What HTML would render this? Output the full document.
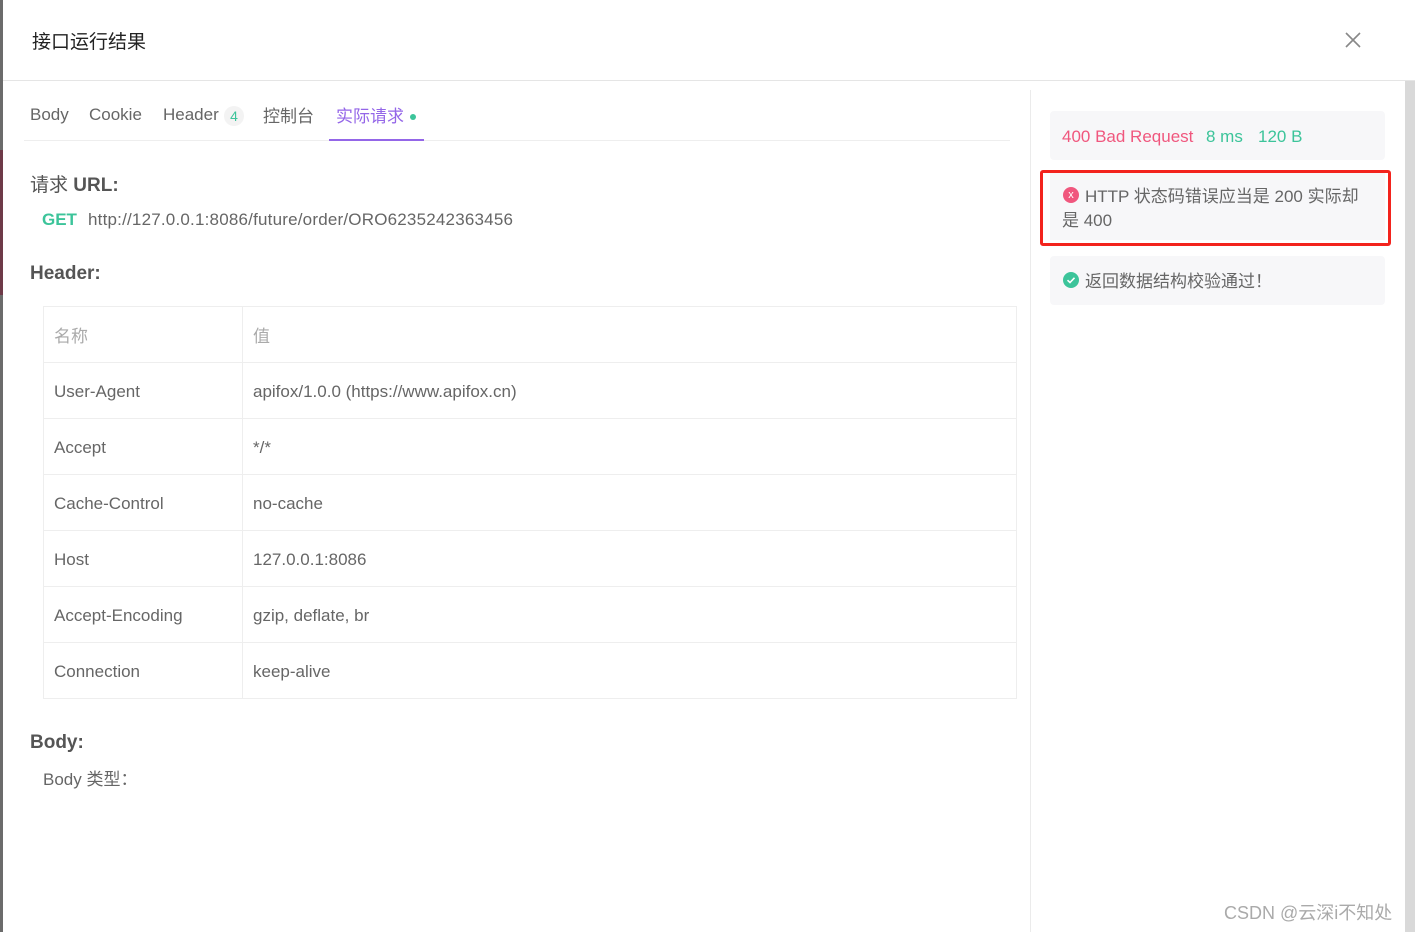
<!DOCTYPE html><html><head><meta charset="utf-8"><style>
*{margin:0;padding:0;box-sizing:border-box}
body{width:1415px;height:932px;background:#fff;font-family:"Liberation Sans","Noto Sans CJK SC",sans-serif;position:relative;overflow:hidden;color:#555}
.a{position:absolute;white-space:nowrap}
</style></head><body>
<div class="a" style="left:0;top:0;width:3px;height:932px;background:#6b6b6b"></div>
<div class="a" style="left:0;top:150px;width:3px;height:145px;background:#6e3a48"></div>
<div class="a" style="left:1405px;top:80px;width:10px;height:852px;background:#d9d9d9"></div>
<div class="a" style="left:32px;top:27px;font-size:19px;color:#222">接口运行结果</div>
<svg class="a" style="left:1345px;top:32px" width="16" height="16"><path d="M1 1L15 15M15 1L1 15" stroke="#888" stroke-width="1.6"/></svg>
<div class="a" style="left:3px;top:80px;width:1412px;height:1px;background:#e5e5e5"></div>
<div class="a" style="left:1030px;top:90px;width:1px;height:842px;background:#ebebeb"></div>
<div class="a" style="left:30px;top:105px;font-size:17px;color:#666">Body</div>
<div class="a" style="left:89px;top:105px;font-size:17px;color:#666">Cookie</div>
<div class="a" style="left:163px;top:105px;font-size:17px;color:#666">Header</div>
<div class="a" style="left:224px;top:106px;width:20px;height:20px;border-radius:10px;background:#f3f3f3;color:#3cc49a;font-size:14px;text-align:center;line-height:20px">4</div>
<div class="a" style="left:263px;top:102px;font-size:17px;color:#666">控制台</div>
<div class="a" style="left:336px;top:102px;font-size:17px;color:#9466e8">实际请求</div>
<div class="a" style="left:410px;top:114px;width:6px;height:6px;border-radius:3px;background:#3cc49a"></div>
<div class="a" style="left:24px;top:140px;width:986px;height:1px;background:#eee"></div>
<div class="a" style="left:329px;top:139px;width:95px;height:2px;background:#9466e8"></div>
<div class="a" style="left:30px;top:170px;font-size:19px;color:#555">请求 <b>URL:</b></div>
<div class="a" style="left:42px;top:210px;font-size:17px;color:#3cc49a;font-weight:bold">GET</div>
<div class="a" style="left:88px;top:210px;font-size:17px;color:#666;letter-spacing:0.2px">http://127.0.0.1:8086/future/order/ORO6235242363456</div>
<div class="a" style="left:30px;top:263px;font-size:19px;color:#555;font-weight:bold">Header:</div>
<div class="a" style="left:43px;top:306px;width:974px;height:393px;border:1px solid #eee"></div>
<div class="a" style="left:242px;top:306px;width:1px;height:393px;background:#eee"></div>
<div class="a" style="left:43px;top:362px;width:974px;height:1px;background:#eee"></div>
<div class="a" style="left:43px;top:418px;width:974px;height:1px;background:#eee"></div>
<div class="a" style="left:43px;top:474px;width:974px;height:1px;background:#eee"></div>
<div class="a" style="left:43px;top:530px;width:974px;height:1px;background:#eee"></div>
<div class="a" style="left:43px;top:586px;width:974px;height:1px;background:#eee"></div>
<div class="a" style="left:43px;top:642px;width:974px;height:1px;background:#eee"></div>
<div style="font-size:17px;color:#666">
<div class="a" style="left:54px;top:322px;color:#aaa">名称</div><div class="a" style="left:253px;top:322px;color:#aaa">值</div>
<div class="a" style="left:54px;top:382px">User-Agent</div><div class="a" style="left:253px;top:382px">apifox/1.0.0 (https://www.apifox.cn)</div>
<div class="a" style="left:54px;top:438px">Accept</div><div class="a" style="left:253px;top:438px">*/*</div>
<div class="a" style="left:54px;top:494px">Cache-Control</div><div class="a" style="left:253px;top:494px">no-cache</div>
<div class="a" style="left:54px;top:550px">Host</div><div class="a" style="left:253px;top:550px">127.0.0.1:8086</div>
<div class="a" style="left:54px;top:606px">Accept-Encoding</div><div class="a" style="left:253px;top:606px">gzip, deflate, br</div>
<div class="a" style="left:54px;top:662px">Connection</div><div class="a" style="left:253px;top:662px">keep-alive</div>
</div>
<div class="a" style="left:30px;top:732px;font-size:19px;color:#555;font-weight:bold">Body:</div>
<div class="a" style="left:43px;top:765px;font-size:17px;color:#666">Body 类型：</div>
<div class="a" style="left:1050px;top:111px;width:335px;height:49px;background:#f7f7f9;border-radius:4px"></div>
<div class="a" style="left:1062px;top:127px;font-size:17px;color:#f0577e">400 Bad Request</div>
<div class="a" style="left:1206px;top:127px;font-size:17px;color:#3cc49a">8 ms</div>
<div class="a" style="left:1258px;top:127px;font-size:17px;color:#3cc49a">120 B</div>
<div class="a" style="left:1050px;top:172px;width:335px;height:68px;background:#f7f7f9"></div>
<div class="a" style="left:1040px;top:170px;width:351px;height:76px;border:3px solid #f3231d;border-radius:3px"></div>
<div class="a" style="left:1063px;top:187px;width:16px;height:16px;border-radius:8px;background:#f0577e;color:#fff;font-size:11px;text-align:center;line-height:16px">x</div>
<div class="a" style="left:1085px;top:182px;font-size:17px;color:#666">HTTP 状态码错误应当是 200 实际却</div>
<div class="a" style="left:1062px;top:206px;font-size:17px;color:#666">是 400</div>
<div class="a" style="left:1050px;top:256px;width:335px;height:49px;background:#f7f7f9;border-radius:4px"></div>
<svg class="a" style="left:1063px;top:272px" width="16" height="16"><circle cx="8" cy="8" r="8" fill="#3cc49a"/><path d="M4.5 8.2L7 10.5L11.5 5.8" stroke="#fff" stroke-width="1.6" fill="none"/></svg>
<div class="a" style="left:1085px;top:267px;font-size:17px;color:#666">返回数据结构校验通过！</div>
<div class="a" style="left:1224px;top:899px;font-size:18px;color:#aaa">CSDN @云深i不知处</div>
</body></html>
